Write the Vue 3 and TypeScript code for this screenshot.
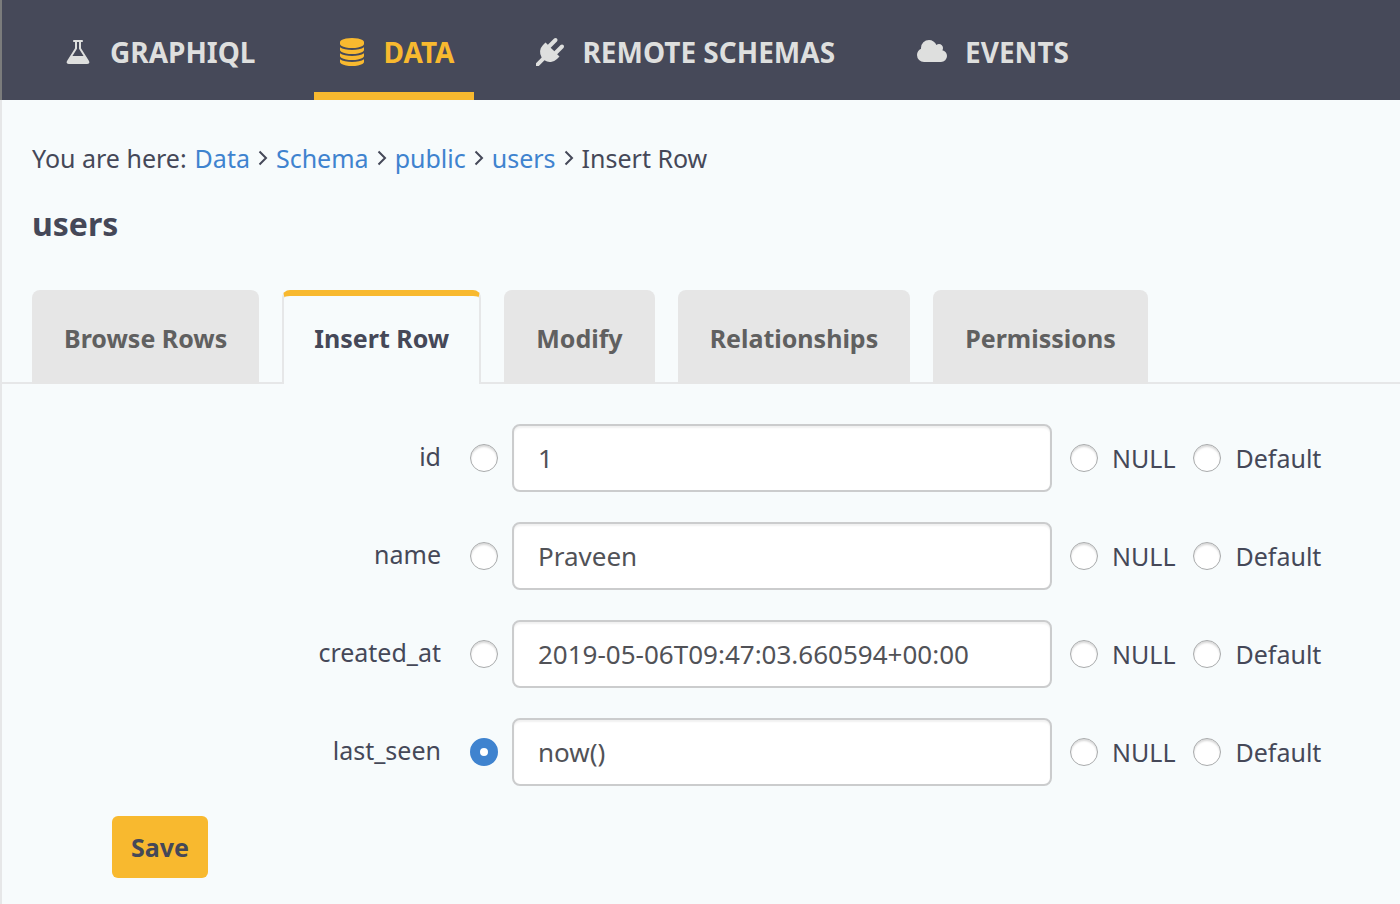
<script setup lang="ts">
import { reactive } from 'vue'

interface NavItem {
  label: string
  icon: string
  viewBox: string
  width: number
  active?: boolean
}

interface Column {
  name: string
  value: string
  mode: 'value' | 'null' | 'default' | ''
}

const navItems: NavItem[] = [
  {
    label: 'GRAPHIQL',
    viewBox: '0 0 1792 1792',
    width: 28,
    icon: 'M1591 1448q56 89 21.5 152.5t-140.5 63.5h-1152q-106 0-140.5-63.5t21.5-152.5l503-793v-399h-64q-26 0-45-19t-19-45 19-45 45-19h512q26 0 45 19t19 45-19 45-45 19h-64v399zm-779-725l-272 429h712l-272-429-20-31v-436h-128v436z',
  },
  {
    label: 'DATA',
    viewBox: '0 0 1792 1792',
    width: 28,
    active: true,
    icon: 'M896 768q237 0 443-43t325-127v170q0 69-103 128t-280 93.5-385 34.5-385-34.5-280-93.5-103-128v-170q119 84 325 127t443 43zm0 768q237 0 443-43t325-127v170q0 69-103 128t-280 93.5-385 34.5-385-34.5-280-93.5-103-128v-170q119 84 325 127t443 43zm0-384q237 0 443-43t325-127v170q0 69-103 128t-280 93.5-385 34.5-385-34.5-280-93.5-103-128v-170q119 84 325 127t443 43zm0-1152q208 0 385 34.5t280 93.5 103 128v128q0 69-103 128t-280 93.5-385 34.5-385-34.5-280-93.5-103-128v-128q0-69 103-128t280-93.5 385-34.5z',
  },
  {
    label: 'REMOTE SCHEMAS',
    viewBox: '0 0 1792 1792',
    width: 28,
    icon: 'M1755 453q37 38 37 90.5t-37 90.5l-401 400 150 150-160 160q-163 163-389.5 186.5t-411.5-100.5l-362 362h-181v-181l362-362q-124-185-100.5-411.5t186.5-389.5l160-160 150 150 400-401q38-37 91-37t90 37 37 90.5-37 90.5l-400 401 234 234 401-400q38-37 91-37t90 37z',
  },
  {
    label: 'EVENTS',
    viewBox: '64 0 1920 1792',
    width: 30,
    icon: 'M1984 1152q0 159-112.5 271.5t-271.5 112.5h-1088q-185 0-316.5-131.5t-131.5-316.5q0-132 71-241.5t187-163.5q-2-28-2-43 0-212 150-362t362-150q158 0 286.5 88t187.5 230q70-62 166-62 106 0 181 75t75 181q0 75-41 138 129 30 213 134.5t84 239.5z',
  },
]

const crumbs = ['Data', 'Schema', 'public', 'users']
const tabs = ['Browse Rows', 'Insert Row', 'Modify', 'Relationships', 'Permissions']
const activeTab = 'Insert Row'

const columns = reactive<Column[]>([
  { name: 'id', value: '1', mode: '' },
  { name: 'name', value: 'Praveen', mode: '' },
  { name: 'created_at', value: '2019-05-06T09:47:03.660594+00:00', mode: '' },
  { name: 'last_seen', value: 'now()', mode: 'value' },
])
</script>

<template>
  <div class="page">
    <nav class="topbar">
      <a v-for="item in navItems" :key="item.label" href="#" class="nav-item" :class="{ active: item.active }">
        <svg :viewBox="item.viewBox" :width="item.width" height="28" aria-hidden="true"><path :d="item.icon" /></svg>
        <span>{{ item.label }}</span>
      </a>
    </nav>

    <main class="content">
      <div class="breadcrumb">
        <span>You are here:</span>
        <template v-for="crumb in crumbs" :key="crumb">
          <a href="#">{{ crumb }}</a>
          <svg class="chevron" viewBox="0 0 10 16" width="10" height="16" aria-hidden="true"><path d="M1.5 1.5 8 8l-6.5 6.5" /></svg>
        </template>
        <span>Insert Row</span>
      </div>

      <h1>users</h1>

      <div class="tabs">
        <a v-for="tab in tabs" :key="tab" href="#" class="tab" :class="{ active: tab === activeTab }">{{ tab }}</a>
      </div>

      <form @submit.prevent>
        <div v-for="col in columns" :key="col.name" class="row">
          <label class="name" :for="`${col.name}-value`">{{ col.name }}</label>
          <input v-model="col.mode" type="radio" :name="`${col.name}-mode`" value="value" :aria-label="`Use a value for ${col.name}`" />
          <input :id="`${col.name}-value`" v-model="col.value" type="text" class="field" />
          <div class="options">
            <label><input v-model="col.mode" type="radio" :name="`${col.name}-mode`" value="null" /><span>NULL</span></label>
            <label><input v-model="col.mode" type="radio" :name="`${col.name}-mode`" value="default" /><span>Default</span></label>
          </div>
        </div>
        <button type="submit" class="save">Save</button>
      </form>
    </main>
  </div>
</template>

<style>
html,
body {
  background: #f7fbfc;
}
</style>

<style scoped>
.page {
  box-sizing: border-box;
  min-height: 100vh;
  background: #f7fbfc;
  color: #454858;
  font-family: 'Noto Sans', 'Open Sans', sans-serif;
  font-size: 25px;
  line-height: 36px;
}
a {
  text-decoration: none;
}
.topbar {
  display: flex;
  gap: 38px;
  padding-left: 38px;
  background: #464959;
  border-left: 2px solid #7b7c7c;
}
.nav-item {
  box-sizing: border-box;
  display: flex;
  align-items: center;
  gap: 18px;
  height: 100px;
  padding: 12px 20px 0 24px;
  border-bottom: 8px solid transparent;
  color: #dedfde;
  font-size: 28px;
  font-weight: 700;
  white-space: nowrap;
}
.nav-item svg {
  fill: currentColor;
}
.nav-item.active {
  color: #f8b92f;
  border-bottom-color: #f8b92f;
}
.content {
  box-sizing: border-box;
  min-height: calc(100vh - 100px);
  padding-top: 40px;
  border-left: 2px solid #e6e7e8;
}
.breadcrumb {
  display: flex;
  align-items: center;
  gap: 8px;
  padding-left: 30px;
}
.breadcrumb a {
  color: #3f83cf;
}
.chevron {
  fill: none;
  stroke: #454858;
  stroke-width: 2;
}
h1 {
  margin: 28px 0 46px;
  padding-left: 30px;
  font-size: 32px;
  line-height: 40px;
}
.tabs {
  display: flex;
  gap: 23px;
  padding-left: 30px;
  border-bottom: 2px solid #e6e7e8;
}
.tab {
  box-sizing: border-box;
  height: 94px;
  margin-bottom: -2px;
  padding: 30px 32px 0;
  border-radius: 8px 8px 0 0;
  background: #e6e6e6;
  color: #606060;
  font-weight: 700;
  white-space: nowrap;
}
.tab.active {
  padding: 24px 30px 0;
  border: 2px solid #e6e7e8;
  border-top: 6px solid #f8b92f;
  border-bottom: 0;
  background: #f7fbfc;
  color: #454858;
}
form {
  padding-top: 40px;
}
.row {
  display: grid;
  grid-template-columns: 454fr 28px 540fr 334fr;
  align-items: center;
  gap: 14px;
  margin-bottom: 30px;
}
.name {
  padding: 0 15px 4px 0;
  text-align: right;
}
.field {
  box-sizing: border-box;
  width: 100%;
  min-width: 0;
  height: 68px;
  padding: 0 24px;
  border: 2px solid #cbcccd;
  border-radius: 8px;
  background: #fff;
  box-shadow: inset 0 2px 2px rgba(0, 0, 0, 0.06);
  color: #515257;
  font: inherit;
  font-size: 26px;
  outline: none;
}
input[type='radio'] {
  appearance: none;
  flex: none;
  box-sizing: border-box;
  width: 28px;
  height: 28px;
  margin: 0;
  border: 1px solid #a9abac;
  border-radius: 50%;
  background: #fff;
  box-shadow: inset 0 2px 2px rgba(0, 0, 0, 0.15);
}
input[type='radio']:checked {
  border: 10px solid #3f83cf;
  box-shadow: none;
}
.options {
  display: flex;
  gap: 18px;
  padding-left: 4px;
}
.options label {
  display: flex;
  align-items: center;
  gap: 14px;
}
.save {
  display: block;
  min-width: 96px;
  height: 62px;
  margin-left: 110px;
  padding: 0 16px;
  border: 0;
  border-radius: 6px;
  background: #f8b92f;
  color: #454858;
  font: inherit;
  font-weight: 700;
}
</style>
